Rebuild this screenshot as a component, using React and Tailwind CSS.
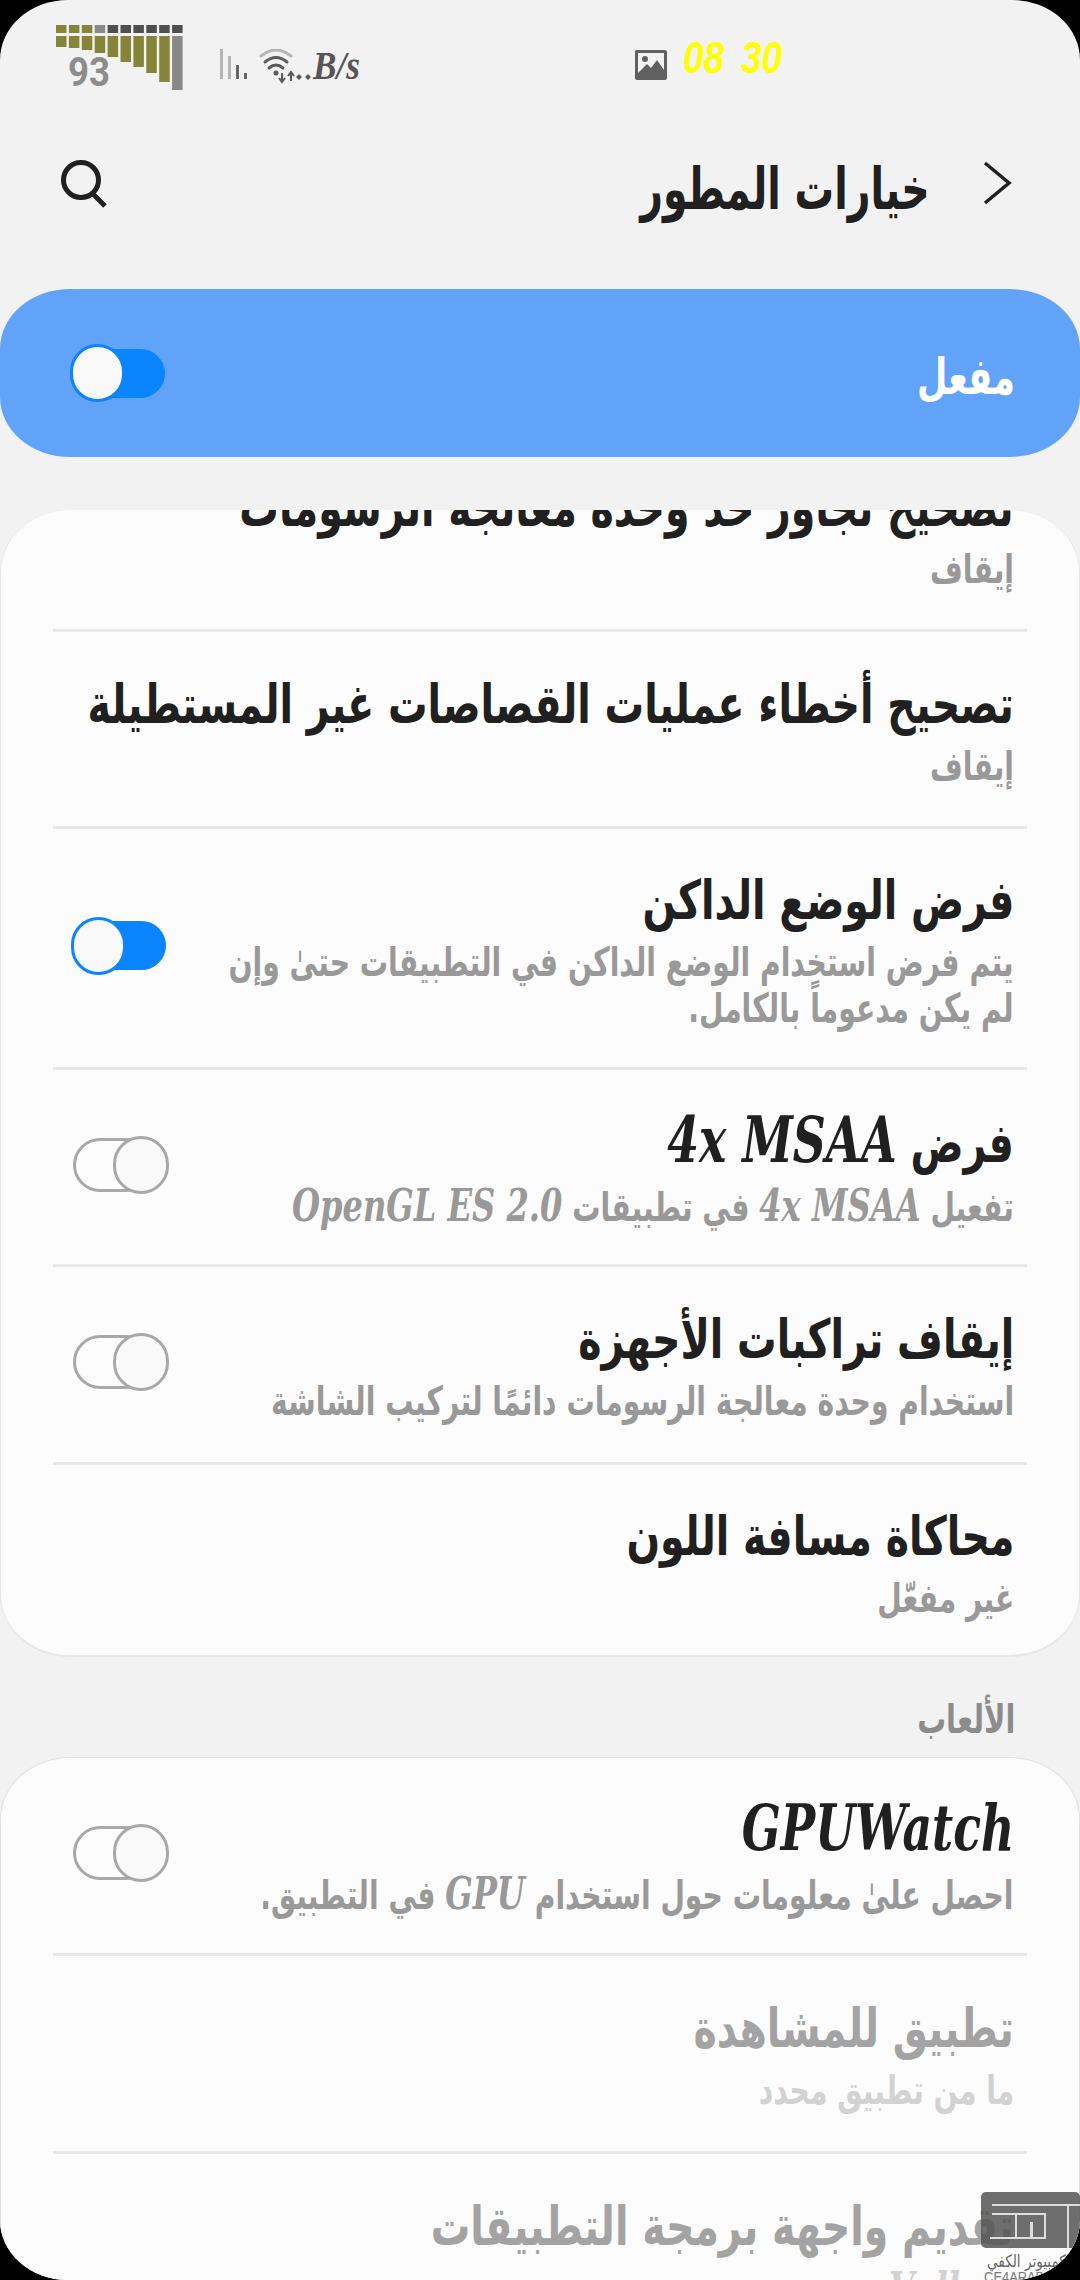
import React from 'react';

const arabicFont = "font-['DejaVu_Sans',sans-serif]";
const latinFont = "font-['DejaVu_Serif','Liberation_Serif',serif]";

const Latin = ({ children, small }) => (
  <span dir="ltr" className={`${latinFont} italic ${small ? 'text-[1.14em]' : 'text-[1.16em]'}`}>{children}</span>
);

const Toggle = ({ on, className = '' }) =>
  on ? (
    <div dir="ltr" className={`relative w-[98px] h-[58px] shrink-0 flex items-center ${className}`}>
      <div className="w-[93px] h-[49px] ml-[2px] rounded-full bg-[#0a84ff]" />
      <div className="absolute left-0 top-0 w-[55px] h-[58px] rounded-full bg-[#f9f9f9] border-[3px] border-[#0a84ff]" />
    </div>
  ) : (
    <div dir="ltr" className={`relative w-[98px] h-[58px] shrink-0 flex items-center ${className}`}>
      <div className="w-[80px] ml-[2px] h-[54px] rounded-full border-[3px] border-[#a8a8a8]" />
      <div className="absolute left-[42px] top-0 w-[56px] h-[58px] rounded-full bg-[#f9f9f9] border-[3px] border-[#a8a8a8]" />
    </div>
  );

const Row = ({ title, sub, toggle, heightClass, titleClass = 'text-[#202020]', align = 'justify-center pt-[5px]', divider = true }) => (
  <div className={`${heightClass} flex flex-col`}>
    <div className="flex-1 min-h-0 flex items-center justify-between pr-[65px] pl-[70px]">
      <div className={`flex-1 min-w-0 flex flex-col h-full ${align} gap-[8px]`}>
        <div className={`w-max origin-right scale-x-[0.73] text-[54px] leading-[60px] font-bold whitespace-nowrap ${titleClass}`}>{title}</div>
        {sub}
      </div>
      {toggle !== undefined && <Toggle on={toggle} className="mb-[5px]" />}
    </div>
    {divider && <div className="h-[3px] mx-[52px] bg-[#e8e8e8]" />}
  </div>
);

const Sub = ({ children, className = 'text-[#999999]' }) => (
  <div className={`w-max origin-right scale-x-[0.705] text-[40px] leading-[46px] font-bold whitespace-nowrap ${className}`}>{children}</div>
);

const BatteryMeter = () => {
  const bottoms = [47, 48, 50, 53, 57, 62, 67, 73, 82, 90];
  return (
    <svg width="130" height="68" viewBox="55 24 130 68" className="shrink-0">
      {bottoms.map((bottom, i) => {
        const x = 56 + i * 12.9;
        const topFill = i < 3 ? '#85853a' : i === 3 ? '#8a8a8a' : '#4f4f4f';
        const barFill = i === 9 ? '#888888' : '#85853a';
        return (
          <g key={i}>
            <rect x={x} y="25" width="10.5" height="8" fill={topFill} />
            <rect x={x} y="36" width="10.5" height={bottom - 36} fill={barFill} />
          </g>
        );
      })}
      <text x="68" y="86" fontSize="40" fontWeight="700" fontFamily="Roboto, sans-serif" fill="#8c8c8c" textLength="42" lengthAdjust="spacingAndGlyphs">93</text>
    </svg>
  );
};

const NetworkIcons = () => (
  <svg width="93" height="40" viewBox="0 0 93 40" className="shrink-0">
    <rect x="0" y="0" width="3" height="30" fill="#b5b5b5" />
    <rect x="8" y="7" width="3" height="23" fill="#b5b5b5" />
    <rect x="16" y="16" width="3" height="14" fill="#666666" />
    <rect x="24" y="24" width="3" height="6" fill="#666666" />
    <g fill="none" strokeWidth="3" strokeLinecap="round">
      <path d="M41 7 Q56 -5 71 7" stroke="#b5b5b5" />
      <path d="M45 13 Q56 4 67 13" stroke="#5a5a5a" />
      <path d="M49 19 Q56 13 63 19" stroke="#5a5a5a" />
    </g>
    <circle cx="56" cy="24" r="2.5" fill="#5a5a5a" />
    <path d="M62 24 L62 32 M59 29 L62 33 L65 29" stroke="#5a5a5a" strokeWidth="2" fill="none" />
    <path d="M71 32 L71 24 M68 27 L71 23 L74 27" stroke="#5a5a5a" strokeWidth="2" fill="none" />
    <path d="M79 25 l3 3 l-3 3 l-3 -3 z M88 25 l3 3 l-3 3 l-3 -3 z" fill="#5a5a5a" />
  </svg>
);

const PictureIcon = () => (
  <svg width="32" height="30" viewBox="0 0 32 30" className="shrink-0">
    <rect width="32" height="30" rx="2" fill="#606060" />
    <rect x="3" y="3" width="26" height="20" fill="#f2f2f2" />
    <circle cx="10" cy="9" r="3" fill="#606060" />
    <path d="M3 23 L12 14 L16 18 L22 10 L29 20 L29 23 Z" fill="#606060" />
  </svg>
);

const StatusBar = () => (
  <div className="h-[104px] flex items-start pl-[55px] pt-[24px]" dir="ltr">
    <BatteryMeter />
    <div className="flex items-center ml-[35px] mt-[25px]">
      <NetworkIcons />
      <span className="font-['Liberation_Serif',serif] italic font-bold text-[39px] leading-[36px] text-[#555555] -mt-[6px] origin-left scale-x-[0.9]">B/s</span>
    </div>
    <div className="flex items-start ml-[270px] mt-[12px]">
      <div className="mt-[14px]"><PictureIcon /></div>
      <div className="ml-[16px] flex gap-[17px] font-['Liberation_Sans',sans-serif] italic text-[44px] leading-[44px] text-[#ffff00] font-bold">
        <span className="w-[41px] origin-left scale-x-[0.84]">08</span>
        <span className="w-[43px] origin-left scale-x-[0.84]">30</span>
      </div>
    </div>
  </div>
);

const Logo = () => (
  <div className="absolute right-0 top-[2192px] w-[99px] flex flex-col items-center">
    <div className="w-[99px] h-[56px] rounded-[5px] bg-[#555555]/85 relative overflow-hidden">
      <div className="absolute left-[11px] top-[12px] right-0 h-[2px] bg-[#dddddd]" />
      <div className="absolute left-[11px] top-[21px] w-[53px] h-[2px] bg-[#dddddd]" />
      <div className="absolute left-[9px] top-[45px] w-[55px] h-[2px] bg-[#dddddd]" />
      <div className="absolute left-[34px] top-[23px] w-[2px] h-[22px] bg-[#dddddd]" />
      <div className="absolute left-[49px] top-[30px] w-[3px] h-[15px] bg-[#dddddd]" />
      <div className="absolute left-[63px] top-[21px] w-[2px] h-[26px] bg-[#dddddd]" />
      <div className="absolute left-[86px] top-[12px] w-[2px] h-[44px] bg-[#dddddd]" />
    </div>
    <div className="mt-[3px] w-max origin-center scale-x-[0.8] text-[17px] leading-[20px] text-[#666666] whitespace-nowrap">الكمبيوتر الكفي</div>
    <div className="w-max origin-center scale-x-[0.92] text-[14px] leading-[12px] text-[#777777] font-['Liberation_Sans',sans-serif] whitespace-nowrap" dir="ltr">CE4ARAB.COM</div>
  </div>
);

const App = () => (
  <div className="w-[1080px] h-[2280px] bg-black overflow-hidden">
    <div dir="rtl" className={`relative w-[1080px] h-[2280px] rounded-[68px/60px] overflow-hidden bg-[#f2f2f2] ${arabicFont}`}>
      <StatusBar />

      <div className="h-[185px] flex items-center justify-between pr-[68px] pl-[60px] pb-[16px]">
        <div className="flex items-center">
          <svg width="30" height="44" viewBox="0 0 30 44" fill="none" stroke="#202020" strokeWidth="3.5" className="shrink-0 mb-[12px]">
            <path d="M3 2 L27 22 L3 42" />
          </svg>
          <div className="mr-[52px] w-max origin-right scale-x-[0.68] text-[58px] leading-[60px] font-bold text-[#202020] whitespace-nowrap">خيارات المطور</div>
        </div>
        <svg width="48" height="48" viewBox="0 0 48 48" fill="none" stroke="#202020" strokeWidth="5" className="shrink-0 mb-[10px]">
          <circle cx="21" cy="20" r="17.5" />
          <path d="M32 33 L45 46" />
        </svg>
      </div>

      <div className="h-[168px] rounded-[70px/60px] bg-[#62a3fa] flex items-center justify-between pr-[65px] pl-[70px]">
        <div className="w-max origin-right scale-x-[0.7] pt-[8px] text-[50px] font-bold text-white">مفعل</div>
        <Toggle on />
      </div>

      <div className="mt-[53px] h-[1147px] rounded-[70px/62px] bg-[#fcfcfc] border-b-2 border-x border-[#e6e6e6] overflow-hidden">
        <Row
          heightClass="h-[122px]"
          align="justify-end pb-[37px]"
          title="تصحيح تجاوز حد وحدة معالجة الرسومات"
          sub={<Sub>إيقاف</Sub>}
        />
        <Row heightClass="h-[197px]" title="تصحيح أخطاء عمليات القصاصات غير المستطيلة" sub={<Sub>إيقاف</Sub>} />
        <Row
          heightClass="h-[241px]"
          title="فرض الوضع الداكن"
          sub={<Sub>يتم فرض استخدام الوضع الداكن في التطبيقات حتىٰ وإن<br />لم يكن مدعوماً بالكامل.</Sub>}
          toggle={true}
        />
        <Row
          heightClass="h-[197px]"
          title={<>فرض <Latin>4x MSAA</Latin></>}
          sub={<Sub>تفعيل <Latin small>4x MSAA</Latin> في تطبيقات <Latin small>OpenGL ES 2.0</Latin></Sub>}
          toggle={false}
        />
        <Row
          heightClass="h-[198px]"
          title="إيقاف تراكبات الأجهزة"
          sub={<Sub>استخدام وحدة معالجة الرسومات دائمًا لتركيب الشاشة</Sub>}
          toggle={false}
        />
        <Row heightClass="h-[192px]" divider={false} title="محاكاة مسافة اللون" sub={<Sub>غير مفعّل</Sub>} />
      </div>

      <div className="h-[100px] pr-[65px] pt-[32px]">
        <div className="w-max origin-right scale-x-[0.72] text-[40px] leading-[60px] font-bold text-[#8c8c8c]">الألعاب</div>
      </div>

      <div className="h-[600px] rounded-[70px/62px] bg-[#fcfcfc] border border-[#e0e0e0]">
        <Row
          heightClass="h-[198px]"
          title={<Latin>GPUWatch</Latin>}
          sub={<Sub>احصل علىٰ معلومات حول استخدام <Latin small>GPU</Latin> في التطبيق.</Sub>}
          toggle={false}
        />
        <Row
          heightClass="h-[198px]"
          titleClass="text-[#a3a3a3]"
          title="تطبيق للمشاهدة"
          sub={<Sub className="text-[#d2d2d2]">ما من تطبيق محدد</Sub>}
        />
        <Row
          heightClass="h-[198px]"
          divider={false}
          align="justify-start pt-[43px]"
          titleClass="text-[#a3a3a3]"
          title="تقديم واجهة برمجة التطبيقات"
          sub={<Sub className="text-[#d2d2d2]"><Latin small>Vulkan</Latin></Sub>}
        />
      </div>

      <Logo />
    </div>
  </div>
);

export default App;
